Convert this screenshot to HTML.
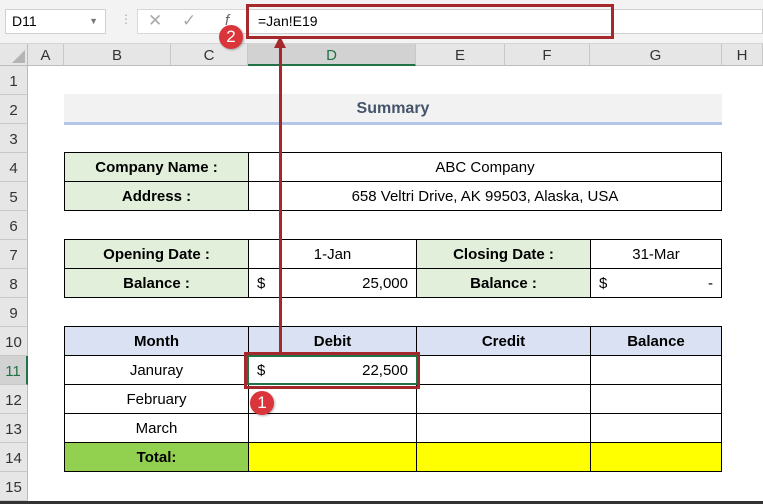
<!DOCTYPE html>
<html><head><style>
*{margin:0;padding:0;box-sizing:border-box}
body{width:763px;height:504px;overflow:hidden;background:#fff;font-family:"Liberation Sans",Calibri,sans-serif;position:relative;font-size:15px;color:#000}
.a{position:absolute}
.hdr{position:absolute;top:44px;height:22px;background:#e6e6e6;border-right:1px solid #c8c8c8;border-bottom:1px solid #bcbcbc;text-align:center;font-size:15px;line-height:23px;color:#333}
.rh{position:absolute;left:0;width:28px;height:29px;background:#e6e6e6;border-bottom:1px solid #c8c8c8;border-right:1px solid #bcbcbc;text-align:center;line-height:31px;font-size:15px;color:#333}
.c{position:absolute;height:30px;border:1px solid #000;text-align:center;line-height:30px;font-size:15px}
.b{font-weight:bold}
.g{background:#e2efda}
.bl{background:#d9e1f2}
.y{background:#ffff00}
.gr{background:#92d050}
.badge{position:absolute;width:24px;height:24px;border-radius:50%;background:#d9353b;color:#fff;text-align:center;line-height:24px;font-size:17px;box-shadow:1px 1px 2px rgba(0,0,0,.3)}
</style></head><body>
<div class="a" style="left:0;top:0;width:763px;height:44px;background:#f3f3f3;border-bottom:1px solid #d4d4d4"></div>
<div class="a" style="left:5px;top:9px;width:101px;height:25px;background:#fff;border:1px solid #d0d0d0;font-size:14px;line-height:23px;padding-left:6px">D11<span style="position:absolute;right:7px;top:0;font-size:9px;color:#777">▼</span></div>
<div class="a" style="left:120px;top:12px;color:#aaa;font-size:12px">⋮</div>
<div class="a" style="left:137px;top:9px;width:110px;height:25px;background:#fff;border:1px solid #d8d8d8"></div>
<div class="a" style="left:148px;top:11px;color:#aaa;font-size:17px">✕</div>
<div class="a" style="left:182px;top:11px;color:#aaa;font-size:17px">✓</div>
<div class="a" style="left:225px;top:12px;color:#666;font-size:15px;font-style:italic">f</div>
<div class="a" style="left:247px;top:9px;width:516px;height:25px;background:#fff;border:1px solid #d0d0d0"></div>
<div class="a" style="left:258px;top:13px;font-size:14px">=Jan!E19</div>
<div class="a" style="left:246px;top:4px;width:368px;height:35px;border:3px solid #a5282d"></div>

<div class="a" style="left:0;top:44px;width:28px;height:22px;background:#e6e6e6;border-right:1px solid #bcbcbc;border-bottom:1px solid #bcbcbc"></div>
<div class="a" style="left:12px;top:50px;width:0;height:0;border-left:13px solid transparent;border-bottom:13px solid #b4b4b4"></div>
<div class="hdr" style="left:28px;width:36px">A</div>
<div class="hdr" style="left:64px;width:107px">B</div>
<div class="hdr" style="left:171px;width:77px">C</div>
<div class="hdr" style="left:248px;width:168px;background:#d2d2d2;border-bottom:2px solid #217346;color:#217346">D</div>
<div class="hdr" style="left:416px;width:89px">E</div>
<div class="hdr" style="left:505px;width:85px">F</div>
<div class="hdr" style="left:590px;width:132px">G</div>
<div class="hdr" style="left:722px;width:41px">H</div>

<div class="rh" style="top:66px">1</div><div class="rh" style="top:95px">2</div><div class="rh" style="top:124px">3</div><div class="rh" style="top:153px">4</div><div class="rh" style="top:182px">5</div><div class="rh" style="top:211px">6</div><div class="rh" style="top:240px">7</div><div class="rh" style="top:269px">8</div><div class="rh" style="top:298px">9</div><div class="rh" style="top:327px">10</div><div class="rh" style="top:356px;background:#d2d2d2;border-right:2px solid #217346;color:#217346">11</div><div class="rh" style="top:385px">12</div><div class="rh" style="top:414px">13</div><div class="rh" style="top:443px">14</div><div class="rh" style="top:472px">15</div>
<div class="a" style="left:0;top:501px;width:763px;height:3px;background:#333"></div>

<div class="a b" style="left:64px;top:94px;width:658px;height:28px;background:#f2f2f2;text-align:center;line-height:30px;color:#44546a;font-size:16px">Summary</div>
<div class="a" style="left:64px;top:122px;width:658px;height:3px;background:#b4c6e7"></div>

<div class="c b g" style="left:64px;top:152px;width:185px">Company Name :</div>
<div class="c" style="left:248px;top:152px;width:474px">ABC Company</div>
<div class="c b g" style="left:64px;top:181px;width:185px">Address :</div>
<div class="c" style="left:248px;top:181px;width:474px">658 Veltri Drive, AK 99503, Alaska, USA</div>

<div class="c b g" style="left:64px;top:239px;width:185px">Opening Date :</div>
<div class="c" style="left:248px;top:239px;width:169px">1-Jan</div>
<div class="c b g" style="left:416px;top:239px;width:175px">Closing Date :</div>
<div class="c" style="left:590px;top:239px;width:132px">31-Mar</div>
<div class="c b g" style="left:64px;top:268px;width:185px">Balance :</div>
<div class="c" style="left:248px;top:268px;width:169px;text-align:right;padding-right:8px"><span style="float:left;padding-left:8px">$</span>25,000</div>
<div class="c b g" style="left:416px;top:268px;width:175px">Balance :</div>
<div class="c" style="left:590px;top:268px;width:132px;text-align:right;padding-right:8px"><span style="float:left;padding-left:8px">$</span>-</div>

<div class="c b bl" style="left:64px;top:326px;width:185px">Month</div>
<div class="c b bl" style="left:248px;top:326px;width:169px">Debit</div>
<div class="c b bl" style="left:416px;top:326px;width:175px">Credit</div>
<div class="c b bl" style="left:590px;top:326px;width:132px">Balance</div>
<div class="c" style="left:64px;top:355px;width:185px">Januray</div>
<div class="c" style="left:248px;top:355px;width:169px;text-align:right;padding-right:8px"><span style="float:left;padding-left:8px">$</span>22,500</div>
<div class="c" style="left:416px;top:355px;width:175px"></div>
<div class="c" style="left:590px;top:355px;width:132px"></div>
<div class="c" style="left:64px;top:384px;width:185px">February</div>
<div class="c" style="left:248px;top:384px;width:169px"></div>
<div class="c" style="left:416px;top:384px;width:175px"></div>
<div class="c" style="left:590px;top:384px;width:132px"></div>
<div class="c" style="left:64px;top:413px;width:185px">March</div>
<div class="c" style="left:248px;top:413px;width:169px"></div>
<div class="c" style="left:416px;top:413px;width:175px"></div>
<div class="c" style="left:590px;top:413px;width:132px"></div>
<div class="c b gr" style="left:64px;top:442px;width:185px">Total:</div>
<div class="c y" style="left:248px;top:442px;width:169px"></div>
<div class="c y" style="left:416px;top:442px;width:175px"></div>
<div class="c y" style="left:590px;top:442px;width:132px"></div>

<div class="a" style="left:247px;top:355px;width:171px;height:30px;border:2px solid #217346"></div>
<div class="a" style="left:244px;top:352px;width:176px;height:37px;border:3px solid #a5282d"></div>
<div class="a" style="left:279px;top:44px;width:3px;height:308px;background:#a5282d"></div>
<div class="a" style="left:274px;top:36px;width:0;height:0;border-left:6.5px solid transparent;border-right:6.5px solid transparent;border-bottom:12px solid #a5282d"></div>

<div class="badge" style="left:219px;top:25px">2</div>
<div class="badge" style="left:250px;top:391px">1</div>
</body></html>
